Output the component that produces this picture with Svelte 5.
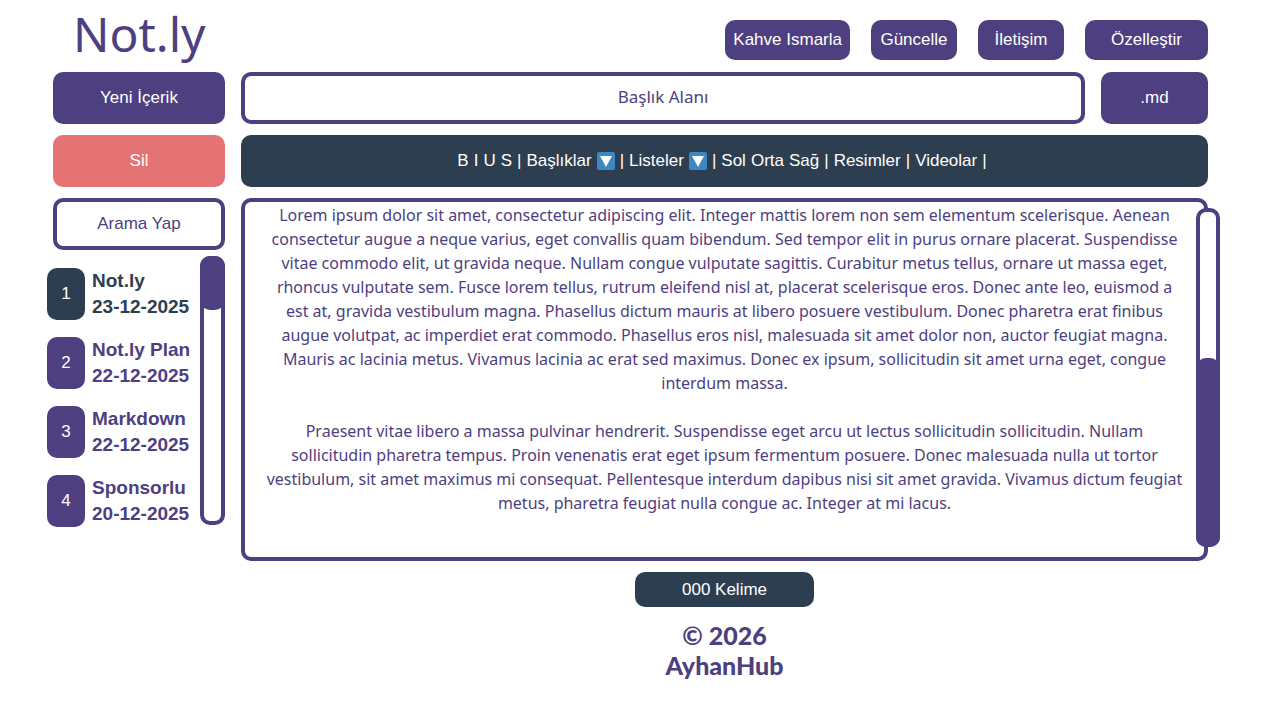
<script>
    let title = $state('');
    let search = $state('');
    let selected = $state(1);

    const notes = [
        { id: 1, name: 'Not.ly', date: '23-12-2025' },
        { id: 2, name: 'Not.ly Plan', date: '22-12-2025' },
        { id: 3, name: 'Markdown', date: '22-12-2025' },
        { id: 4, name: 'Sponsorlu', date: '20-12-2025' }
    ];

    const tools = [
        { labels: ['B', 'I', 'U', 'S'] },
        { labels: ['Başlıklar'], menu: true },
        { labels: ['Listeler'], menu: true },
        { labels: ['Sol', 'Orta', 'Sağ'] },
        { labels: ['Resimler'] },
        { labels: ['Videolar'] }
    ];

    let content = $state(
        [
            'Lorem ipsum dolor sit amet, consectetur adipiscing elit. Integer mattis lorem non sem elementum scelerisque. Aenean',
            'consectetur augue a neque varius, eget convallis quam bibendum. Sed tempor elit in purus ornare placerat. Suspendisse',
            'vitae commodo elit, ut gravida neque. Nullam congue vulputate sagittis. Curabitur metus tellus, ornare ut massa eget,',
            'rhoncus vulputate sem. Fusce lorem tellus, rutrum eleifend nisl at, placerat scelerisque eros. Donec ante leo, euismod a',
            'est at, gravida vestibulum magna. Phasellus dictum mauris at libero posuere vestibulum. Donec pharetra erat finibus',
            'augue volutpat, ac imperdiet erat commodo. Phasellus eros nisl, malesuada sit amet dolor non, auctor feugiat magna.',
            'Mauris ac lacinia metus. Vivamus lacinia ac erat sed maximus. Donec ex ipsum, sollicitudin sit amet urna eget, congue',
            'interdum massa.',
            '',
            'Praesent vitae libero a massa pulvinar hendrerit. Suspendisse eget arcu ut lectus sollicitudin sollicitudin. Nullam',
            'sollicitudin pharetra tempus. Proin venenatis erat eget ipsum fermentum posuere. Donec malesuada nulla ut tortor',
            'vestibulum, sit amet maximus mi consequat. Pellentesque interdum dapibus nisi sit amet gravida. Vivamus dictum feugiat',
            'metus, pharetra feugiat nulla congue ac. Integer at mi lacus.'
        ].join('\n')
    );
</script>

<div class="page">
    <header>
        <h1>Not.ly</h1>
        <nav>
            <button>Kahve Ismarla</button>
            <button>Güncelle</button>
            <button>İletişim</button>
            <button class="wide">Özelleştir</button>
        </nav>
    </header>

    <div class="layout">
        <aside>
            <button class="block">Yeni İçerik</button>
            <button class="block delete">Sil</button>
            <input class="block field" type="text" aria-label="Arama Yap" placeholder="Arama Yap" bind:value={search} />
            <div class="notes">
                <ul>
                    {#each notes as note (note.id)}
                        <li>
                            <button class="note" class:selected={note.id === selected} onclick={() => (selected = note.id)}>
                                <span class="number">{note.id}</span>
                                <span class="info">{note.name}<br />{note.date}</span>
                            </button>
                        </li>
                    {/each}
                </ul>
                <div class="track"><div class="thumb"></div></div>
            </div>
        </aside>

        <main>
            <div class="title-row">
                <input class="block field title" type="text" aria-label="Başlık Alanı" placeholder="Başlık Alanı" bind:value={title} />
                <button class="block">.md</button>
            </div>

            <div class="block toolbar" role="toolbar">
                {#each tools as tool}
                    {#each tool.labels as label}
                        <button>
                            {label}
                            {#if tool.menu}
                                <svg viewBox="0 0 18 18" width="18" height="18" aria-hidden="true">
                                    <rect width="18" height="18" rx="2" fill="#3b88c3" />
                                    <path d="M3 4h12L9 15z" fill="#fff" />
                                </svg>
                            {/if}
                        </button>
                    {/each}
                    <span>|</span>
                {/each}
            </div>

            <div class="editor">
                <textarea class="field content" rows="14" wrap="off" spellcheck="false" aria-label="İçerik" bind:value={content}></textarea>
                <div class="track"><div class="thumb"></div></div>
            </div>

            <div class="count">000 Kelime</div>
            <footer>© 2026<br />AyhanHub</footer>
        </main>
    </div>
</div>

<style>
    :global(body) {
        background: #fff;
    }

    .page {
        padding: 0 72px 0 53px;
        font: 17px/20px 'Liberation Sans', Arial, sans-serif;
        color: #4e3f80;
    }

    .page * {
        box-sizing: border-box;
    }

    button {
        border: none;
        border-radius: 10px;
        padding: 0 8px;
        background: #4e3f80;
        color: #fff;
        font: inherit;
        cursor: pointer;
    }

    header {
        display: flex;
        justify-content: space-between;
        height: 72px;
    }

    h1 {
        margin: 0;
        padding-left: 20px;
        font: 48px/68px 'Noto Sans', sans-serif;
    }

    nav {
        display: flex;
        align-items: center;
        gap: 21px;
        padding-top: 8px;
    }

    nav button {
        height: 40px;
        min-width: 86px;
    }

    nav .wide {
        min-width: 123px;
    }

    .layout {
        display: grid;
        grid-template-columns: 172px minmax(0, 1fr);
        gap: 16px;
    }

    aside,
    main {
        display: flex;
        flex-direction: column;
        gap: 11px;
    }

    .block {
        width: 100%;
        height: 52px;
        flex-shrink: 0;
    }

    .delete {
        background: #e57373;
    }

    .field {
        border: 4px solid #4e3f80;
        border-radius: 10px;
        background: #fff;
        color: #4e3f80;
        font: inherit;
        text-align: center;
        outline: none;
    }

    .field::placeholder {
        color: #4e3f80;
        opacity: 1;
    }

    .title-row {
        display: grid;
        grid-template-columns: minmax(0, 1fr) 107px;
        gap: 16px;
    }

    .title,
    .content {
        font-family: 'Noto Sans', sans-serif;
    }

    .title {
        padding-bottom: 4px;
    }

    .toolbar {
        display: flex;
        align-items: center;
        justify-content: center;
        gap: 5px;
        padding-right: 5px;
        border-radius: 10px;
        background: #2d3e50;
        color: #fff;
    }

    .toolbar button {
        display: flex;
        align-items: center;
        gap: 5px;
        padding: 0;
        background: none;
    }

    .notes {
        display: flex;
        justify-content: space-between;
        margin: -5px 0 0 -6px;
    }

    ul {
        display: flex;
        flex-direction: column;
        gap: 17px;
        margin: 0;
        padding: 12px 0 0;
        list-style: none;
    }

    .note {
        display: flex;
        gap: 7px;
        padding: 0;
        background: none;
        color: #4e3f80;
        text-align: left;
    }

    .number {
        width: 38px;
        border-radius: 10px;
        background: #4e3f80;
        color: #fff;
        line-height: 52px;
        text-align: center;
    }

    .info {
        font-size: 19px;
        font-weight: bold;
        line-height: 26px;
        white-space: nowrap;
    }

    .selected {
        color: #2d3e50;
    }

    .selected .number {
        background: #2d3e50;
    }

    .track {
        width: 25px;
        border: 4px solid #4e3f80;
        border-radius: 10px;
        background: #fff;
    }

    .thumb {
        margin: -4px;
        border-radius: 10px;
        background: #4e3f80;
    }

    .notes .track {
        height: 269px;
    }

    .notes .thumb {
        height: 54px;
    }

    .editor {
        position: relative;
    }

    .content {
        display: block;
        width: 100%;
        padding: 1px 0 18px;
        font-size: 16px;
        line-height: 24px;
        overflow: hidden;
        resize: none;
    }

    .editor .track {
        position: absolute;
        top: 10px;
        right: -12px;
        bottom: 14px;
        display: flex;
        align-items: flex-end;
        width: 24px;
    }

    .editor .thumb {
        flex: 1;
        height: 189px;
    }

    .count {
        align-self: center;
        width: 179px;
        border-radius: 10px;
        background: #2d3e50;
        color: #fff;
        line-height: 35px;
        text-align: center;
    }

    footer {
        padding-top: 2px;
        font: 900 25px/30px Lato, sans-serif;
        text-align: center;
    }
</style>
